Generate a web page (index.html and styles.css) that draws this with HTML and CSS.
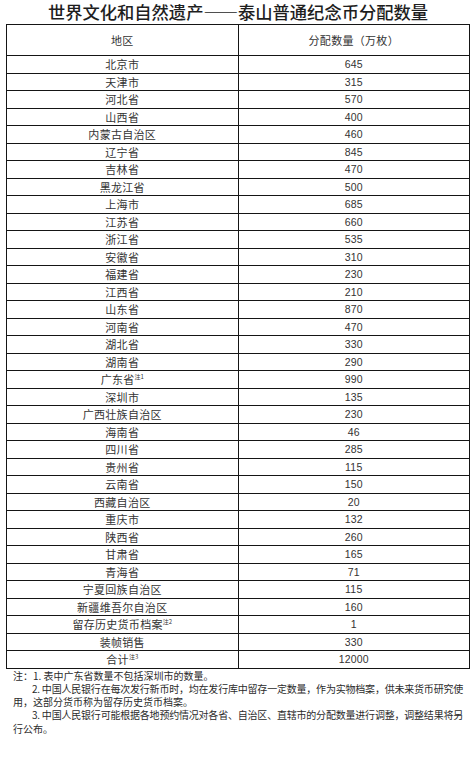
FILE: index.html
```html
<!DOCTYPE html>
<html lang="zh-CN">
<head>
<meta charset="utf-8">
<title>世界文化和自然遗产——泰山普通纪念币分配数量</title>
<link rel="stylesheet" href="styles.css">
</head>
<body>
<h1 class="title">世界文化和自然遗产——泰山普通纪念币分配数量</h1>
<table class="dist">
  <thead>
    <tr class="head"><th>地区</th><th>分配数量（万枚）</th></tr>
  </thead>
  <tbody>
    <tr><td>北京市</td><td class="num">645</td></tr>
    <tr><td>天津市</td><td class="num">315</td></tr>
    <tr><td>河北省</td><td class="num">570</td></tr>
    <tr><td>山西省</td><td class="num">400</td></tr>
    <tr><td>内蒙古自治区</td><td class="num">460</td></tr>
    <tr><td>辽宁省</td><td class="num">845</td></tr>
    <tr><td>吉林省</td><td class="num">470</td></tr>
    <tr><td>黑龙江省</td><td class="num">500</td></tr>
    <tr><td>上海市</td><td class="num">685</td></tr>
    <tr><td>江苏省</td><td class="num">660</td></tr>
    <tr><td>浙江省</td><td class="num">535</td></tr>
    <tr><td>安徽省</td><td class="num">310</td></tr>
    <tr><td>福建省</td><td class="num">230</td></tr>
    <tr><td>江西省</td><td class="num">210</td></tr>
    <tr><td>山东省</td><td class="num">870</td></tr>
    <tr><td>河南省</td><td class="num">470</td></tr>
    <tr><td>湖北省</td><td class="num">330</td></tr>
    <tr><td>湖南省</td><td class="num">290</td></tr>
    <tr><td>广东省<sup class="note">注1</sup></td><td class="num">990</td></tr>
    <tr><td>深圳市</td><td class="num">135</td></tr>
    <tr><td>广西壮族自治区</td><td class="num">230</td></tr>
    <tr><td>海南省</td><td class="num">46</td></tr>
    <tr><td>四川省</td><td class="num">285</td></tr>
    <tr><td>贵州省</td><td class="num">115</td></tr>
    <tr><td>云南省</td><td class="num">150</td></tr>
    <tr><td>西藏自治区</td><td class="num">20</td></tr>
    <tr><td>重庆市</td><td class="num">132</td></tr>
    <tr><td>陕西省</td><td class="num">260</td></tr>
    <tr><td>甘肃省</td><td class="num">165</td></tr>
    <tr><td>青海省</td><td class="num">71</td></tr>
    <tr><td>宁夏回族自治区</td><td class="num">115</td></tr>
    <tr><td>新疆维吾尔自治区</td><td class="num">160</td></tr>
    <tr><td>留存历史货币档案<sup class="note">注2</sup></td><td class="num">1</td></tr>
    <tr><td>装帧销售</td><td class="num">330</td></tr>
    <tr><td>合计<sup class="note">注3</sup></td><td class="num">12000</td></tr>
  </tbody>
</table>
<div class="notes">
  <p class="ln">注：1. 表中广东省数量不包括深圳市的数量。</p>
  <p class="para">
    <span class="ln indent full">2. 中国人民银行在每次发行新币时，均在发行库中留存一定数量，作为实物档案，供未来货币研究使</span>
    <span class="ln">用，这部分货币称为留存历史货币档案。</span>
  </p>
  <p class="para">
    <span class="ln indent full">3. 中国人民银行可能根据各地预约情况对各省、自治区、直辖市的分配数量进行调整，调整结果将另</span>
    <span class="ln">行公布。</span>
  </p>
</div>
</body>
</html>
```
FILE: styles.css
```css
html, body {
  margin: 0;
  padding: 0;
  background: #fff;
}
body {
  width: 476px;
  font-family: "Noto Sans CJK SC", "Noto Sans", sans-serif;
  color: #2b2b2b;
}
.title {
  margin: 0;
  height: 24px;
  line-height: 24px;
  font-size: 17.3px;
  font-weight: 500;
  text-align: center;
  color: #1e1e1e;
  letter-spacing: 0;
}
.dist {
  margin-left: 6px;
  width: 464px;
  border-collapse: collapse;
  table-layout: fixed;
}
.dist th, .dist td {
  border: 1px solid #151515;
  padding: 0;
  text-align: center;
  font-size: 11px;
  font-weight: 400;
  color: #333;
  letter-spacing: 0.3px;
  line-height: 14px;
  width: 50%;
}
.head th {
  height: 30px;
}
.dist tbody td {
  height: 16.5px;
}
.dist td.num {
  font-family: "Liberation Sans", Arial, sans-serif;
  font-size: 10.5px;
  letter-spacing: 0.2px;
}
.note {
  font-size: 6px;
  line-height: 0;
  vertical-align: 5px;
  letter-spacing: 0;
}
.notes {
  margin: 0;
  padding: 0 13px 0 13px;
  width: 450px;
  font-size: 10px;
  line-height: 13.3px;
  color: #2b2b2b;
}
.notes p {
  margin: 0;
}
.ln {
  display: block;
  white-space: nowrap;
}
.indent {
  padding-left: 19px;
}
.full {
  text-align: justify;
  text-align-last: justify;
  letter-spacing: -0.25px;
}
```
